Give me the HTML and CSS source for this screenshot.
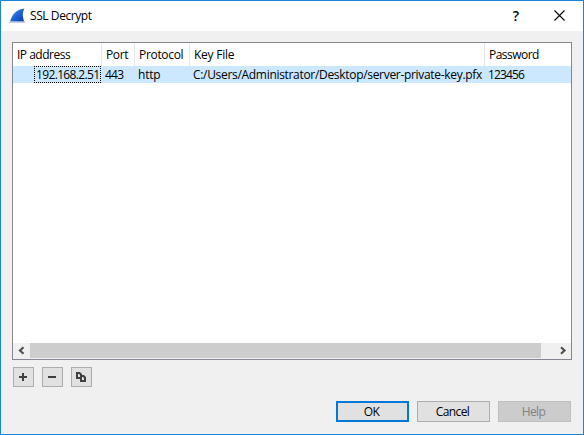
FILE: index.html
```html
<!DOCTYPE html>
<html lang="en">
<head>
<meta charset="utf-8">
<title>SSL Decrypt</title>
<link rel="stylesheet" href="styles.css">
</head>
<body>
<div class="window">
  <header class="titlebar">
    <svg class="fin" width="17" height="16" viewBox="0 0 17 16">
      <defs><linearGradient id="sea" x1="0" y1="0" x2="1" y2="1"><stop offset="0" stop-color="#4a96f5"/><stop offset=".5" stop-color="#1f63d6"/><stop offset="1" stop-color="#0637ac"/></linearGradient></defs>
      <path d="M1 14C3 6 8 1 15.500 .5C13.200 4 13.400 9 15.500 14Z" fill="url(#sea)"/>
      <path d="M.5 13.300L16 13.300V15H0Z" fill="#c5cedd"/>
    </svg>
    <h1 class="title">SSL Decrypt</h1>
    <span class="help-mark">?</span>
    <svg class="close" width="11" height="11" viewBox="0 0 11 11"><path d="M.5 .5L10.500 10.500M10.500 .5L.5 10.500" stroke="#000" stroke-width="1.100"/></svg>
  </header>
  <main class="content">
    <section class="table">
      <div class="row head">
        <span class="cell"><span class="t-ip">IP address</span></span><span class="cell"><span class="t-port">Port</span></span><span class="cell"><span class="t-proto">Protocol</span></span><span class="cell"><span class="t-key">Key File</span></span><span class="cell"><span class="t-pass">Password</span></span>
      </div>
      <div class="row selected">
        <span class="cell focus"><span class="v-ip">192.168.2.51</span></span><span class="cell"><span class="v-port">443</span></span><span class="cell"><span class="v-proto">http</span></span><span class="cell"><span class="v-key">C:/Users/Administrator/Desktop/server-private-key.pfx</span></span><span class="cell"><span class="v-pass">123456</span></span>
      </div>
      <div class="space"></div>
      <div class="scrollbar">
        <svg class="arrow" width="17" height="15" viewBox="0 0 17 15"><path d="M10.500 4.300L7 7.500L10.500 10.700" fill="none" stroke="#505050" stroke-width="2.200"/></svg>
        <div class="thumb"></div>
        <svg class="arrow-right" width="17" height="15" viewBox="0 0 17 15"><path d="M7 4.300L10.500 7.500L7 10.700" fill="none" stroke="#505050" stroke-width="2.200"/></svg>
      </div>
    </section>
    <div class="tools">
      <button class="tool" aria-label="Add"><svg width="19" height="18" viewBox="0 0 19 18"><path d="M5 8H8V5H10V8H13V10H10V13H8V10H5Z" fill="#404040"/></svg></button>
      <button class="tool" aria-label="Remove"><svg width="19" height="18" viewBox="0 0 19 18"><path d="M5 8H13V10H5Z" fill="#404040"/></svg></button>
      <button class="tool" aria-label="Copy"><svg width="19" height="18" viewBox="0 0 19 18"><g fill="#e1e1e1" stroke="#404040" stroke-width="2"><path d="M5 5H7.500L9 6.500V10H5Z"/><path d="M9 8H11.500L13 9.500V13H9Z"/></g></svg></button>
    </div>
    <div class="actions">
      <button class="action primary"><span class="b-ok">OK</span></button>
      <button class="action"><span class="b-cancel">Cancel</span></button>
      <button class="action disabled" disabled><span class="b-help">Help</span></button>
    </div>
  </main>
</div>
</body>
</html>
```
FILE: styles.css
```css
* { box-sizing: border-box; }
body { margin: 0; font: 12px/16px "Open Sans", "Noto Sans", sans-serif; color: #000; }
.window { width: 584px; height: 435px; border: 1px solid #1883d7; background: #f0f0f0; display: flex; flex-direction: column; }
.titlebar { height: 30px; background: #fff; display: flex; align-items: center; padding: 0 17px 0 8px; }
.fin { margin-top: -1px; }
.title { font: inherit; margin: 0 0 0 4px; flex: 1; letter-spacing: -.42px; }
.help-mark { font-size: 14px; font-weight: 600; margin: -1px 35px 0 0; }
.close { display: block; margin-right: 1px; margin-top: -1px; }
.content { padding: 11px; flex: 1; }
.table { width: 560px; height: 318px; border: 1px solid #828790; background: #fff; display: flex; flex-direction: column; }
.row { display: grid; grid-template-columns: 89px 33px 55px 295px 1fr; white-space: nowrap; }
.head { height: 23px; line-height: 24px; }
.head .cell { padding-left: 4px; border-right: 1px solid #e5e5e5; }
.head .cell:last-child { border-right: 0; }
.selected { height: 17px; background: #cce8ff; line-height: 17px; }
.selected .cell { padding-left: 3px; }
.selected .focus { margin: 0 1px 0 21px; padding-left: 1px; border: 1px dotted #000; line-height: 15px; }
.cell > span { display: inline-block; }
.t-ip { letter-spacing: -.5px; }
.t-port { letter-spacing: -.4px; }
.t-proto { letter-spacing: -.32px; }
.t-key { letter-spacing: -.25px; }
.t-pass { letter-spacing: -.52px; }
.v-ip { letter-spacing: -.65px; }
.v-port { letter-spacing: -.75px; }
.v-proto { letter-spacing: -.2px; }
.v-key { letter-spacing: -.31px; }
.v-pass { letter-spacing: -.85px; }
.space { flex: 1; }
.scrollbar { height: 16px; padding-bottom: 1px; background: #f0f0f0; display: flex; }
.thumb { width: 511px; background: #cdcdcd; }
.arrow-right { margin-left: auto; }
.tools { display: flex; gap: 8px; margin: 7px 0 0 1px; }
button { padding: 0; font: inherit; color: inherit; background: #e1e1e1; border: 1px solid #adadad; }
.tool { width: 21px; height: 20px; }
.tool svg { display: block; }
.actions { display: flex; justify-content: flex-end; gap: 8px; margin: 14px 1px 0 0; }
.action { width: 73px; height: 21px; line-height: 19px; padding-right: 2px; letter-spacing: -.6px; }
.primary { border: 2px solid #0078d7; line-height: 17px; }
.disabled { background: #ccc; border-color: #bfbfbf; color: #838383; }
```
